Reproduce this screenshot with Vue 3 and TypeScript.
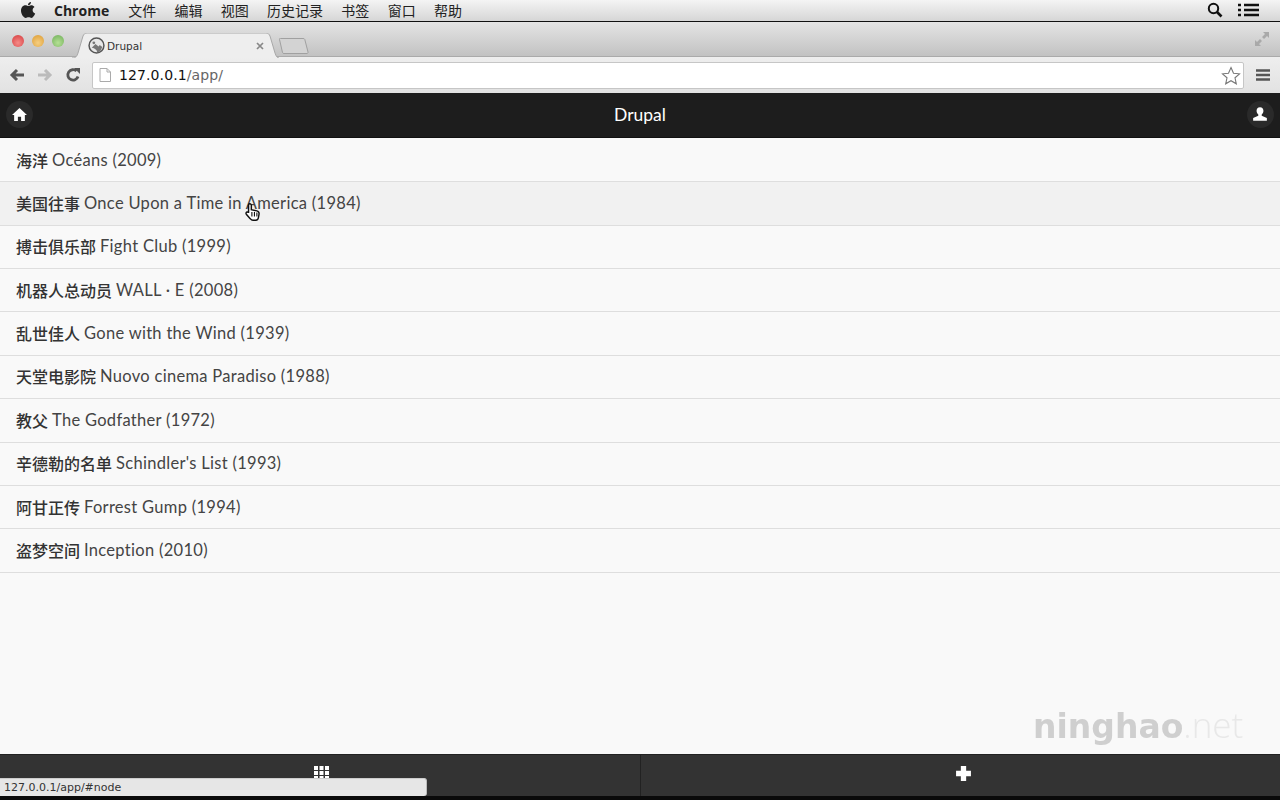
<script setup lang="ts">
const menus: string[] = ['文件', '编辑', '视图', '历史记录', '书签', '窗口', '帮助']
const movies: { zh: string; en: string }[] = [
  { zh: '海洋', en: 'Océans (2009)' },
  { zh: '美国往事', en: 'Once Upon a Time in America (1984)' },
  { zh: '搏击俱乐部', en: 'Fight Club (1999)' },
  { zh: '机器人总动员', en: 'WALL · E (2008)' },
  { zh: '乱世佳人', en: 'Gone with the Wind (1939)' },
  { zh: '天堂电影院', en: 'Nuovo cinema Paradiso (1988)' },
  { zh: '教父', en: 'The Godfather (1972)' },
  { zh: '辛德勒的名单', en: "Schindler's List (1993)" },
  { zh: '阿甘正传', en: 'Forrest Gump (1994)' },
  { zh: '盗梦空间', en: 'Inception (2010)' },
]
</script>

<template>
  <div class="screen">
    <header class="menubar">
      <svg class="apple" viewBox="0 0 16 18" width="16" height="18">
        <path d="M11 1c.2 1.500-1.300 3.300-3 3.200C7.800 2.700 9.400 1.100 11 1zM8 5c.8 0 1.800-.8 3.200-.8 1.200 0 2.500.6 3.300 1.800-2.800 1.600-2.300 5.500.7 6.600-.7 1.700-2.200 4.400-3.800 4.400-1 0-1.500-.7-2.800-.7s-1.900.7-2.900.7C3.800 17 1 13.200 1 9.800 1 6.500 3.100 4.300 5.300 4.300 6.400 4.300 7.300 5 8 5z" fill="#222" />
      </svg>
      <strong class="app-name">Chrome</strong>
      <nav class="menus"><span v-for="m in menus" :key="m">{{ m }}</span></nav>
      <span class="spacer"></span>
      <svg viewBox="0 0 16 16" width="16" height="16" class="sys-search">
        <circle cx="6.500" cy="6.500" r="4.700" fill="none" stroke="#111" stroke-width="2" />
        <path d="M10 10l4.500 4.500" stroke="#111" stroke-width="2.600" />
      </svg>
      <svg viewBox="0 0 21 14" width="21" height="14" class="sys-list">
        <path d="M0 2h3M6 2h15M0 7h3M6 7h15M0 12h3M6 12h15" stroke="#111" stroke-width="2.400" />
      </svg>
    </header>

    <section class="tabstrip">
      <div class="lights"><i class="red"></i><i class="yellow"></i><i class="green"></i></div>
      <div class="tab">
        <svg class="tab-bg" viewBox="0 0 207 25" width="207" height="25">
          <path d="M0 25C4 25 5 23 6 20L11 3C12 1 13 0 15 0H194C196 0 197 1 198 3L203 20C204 23 205 25 207 25" fill="#eeeeee" stroke="#a8a8a8" />
        </svg>
        <svg class="favicon" viewBox="0 0 16 16" width="17" height="17">
          <circle cx="8" cy="8" r="7" fill="#e8e8e8" stroke="#555" stroke-width="1.400" />
          <path d="M3.500 10c2 0 3 .8 4.500 2.500l.8 2 2.700-1 2-4-2.500-2-1 1.500-3-2.500z" fill="#777" />
          <circle cx="5.500" cy="5.500" r="1.300" fill="#777" />
        </svg>
        <span class="tab-title">Drupal</span>
        <svg class="tab-close" viewBox="0 0 8 8" width="8" height="8">
          <path d="M1 1l6 6M7 1L1 7" stroke="#888" stroke-width="1.700" />
        </svg>
      </div>
      <svg class="newtab" viewBox="0 0 31 16" width="31" height="16">
        <path d="M1.500 1.500C1 .8 1.500.5 2.500.5H25c1 0 1.500.3 1.800 1L30 14c.2.800-.2 1.500-1 1.500H6c-.8 0-1.300-.3-1.500-1z" fill="#d3d3d3" stroke="#a0a0a0" />
      </svg>
      <span class="spacer"></span>
      <svg class="expand" viewBox="0 0 16 16" width="16" height="16">
        <path d="M9 1h6v6l-2-2-3 3-2-2 3-3zM7 15H1V9l2 2 3-3 2 2-3 3z" fill="#a9a9a9" />
      </svg>
    </section>

    <section class="toolbar">
      <svg viewBox="0 0 16 14" width="16" height="14">
        <path d="M15 7H4M8 2L3 7l5 5" fill="none" stroke="#555" stroke-width="3" />
      </svg>
      <svg viewBox="0 0 16 14" width="16" height="14">
        <path d="M1 7h11M8 2l5 5-5 5" fill="none" stroke="#bbb" stroke-width="3" />
      </svg>
      <svg viewBox="0 0 16 16" width="16" height="16">
        <path d="M13 9.500A5.200 5.200 0 1 1 11.500 4" fill="none" stroke="#555" stroke-width="2.800" />
        <path d="M9 1h6v6z" fill="#555" />
      </svg>
      <div class="omnibox">
        <svg viewBox="0 0 12 14" width="12" height="14">
          <path d="M1 .5h7l3.500 3.500v9.500H1zM8 .5V4h3.500" fill="#fff" stroke="#aaa" />
        </svg>
        <span class="url"><b>127.0.0.1</b>/app/</span>
        <span class="spacer"></span>
        <svg viewBox="0 0 20 19" width="20" height="19">
          <path d="M10 1.500l2.500 5.700 6 .6-4.500 4 1.300 6L10 14.700l-5.300 3.100 1.300-6-4.500-4 6-.6z" fill="#fff" stroke="#777" stroke-width="1.100" />
        </svg>
      </div>
      <svg viewBox="0 0 14 14" width="14" height="14" class="wrench">
        <path d="M0 2.500h14M0 7h14M0 11.500h14" stroke="#555" stroke-width="2.400" />
      </svg>
    </section>

    <header class="appbar">
      <span class="round-btn">
        <svg viewBox="0 0 14 14" width="15" height="15">
          <path d="M7 1L0 7.500h2V13h3.500V9h3v4H12V7.500h2z" fill="#fff" />
        </svg>
      </span>
      <h1>Drupal</h1>
      <span class="round-btn">
        <svg viewBox="0 0 14 14" width="16" height="16">
          <path d="M7 1c2 0 3 1.400 3 3.200 0 1.400-.7 2.700-1.500 3.300v1.100L13 10.500V13H1v-2.500l4.500-1.900V7.500C4.700 6.900 4 5.600 4 4.200 4 2.400 5 1 7 1z" fill="#fff" />
        </svg>
      </span>
    </header>

    <main class="content">
      <ul class="list">
        <li v-for="(movie, i) in movies" :key="movie.en" :class="{ hover: i === 1 }">
          <span class="zh">{{ movie.zh }}</span><span>{{ movie.en }}</span>
        </li>
      </ul>
      <div class="watermark"><b>ninghao</b><span>.net</span></div>
      <svg class="cursor" viewBox="0 0 14 18" width="16" height="20">
        <path d="M4 1.500c1 0 1.500.6 1.500 1.500v4l5 1c1.500.4 2 1 2 2.500l-.5 3c-.2 1.500-1 3-2.500 3H7c-1 0-1.800-.6-2.500-1.500L1 11c-.6-1-.2-2 .8-2 .6 0 1.100.4 1.200.8V3c0-1 .3-1.500 1-1.500z" fill="#fff" stroke="#111" stroke-width="1.300" />
        <path d="M6 9v4M8.300 9v4M10.500 9.500V13" stroke="#111" stroke-width="1" />
      </svg>
    </main>

    <footer class="tabbar">
      <div class="tabcell">
        <svg viewBox="0 0 15 14" width="15" height="14">
          <path d="M0 0h4v4H0zM5.500 0h4v4h-4zM11 0h4v4h-4zM0 5h4v4H0zM5.500 5h4v4h-4zM11 5h4v4h-4zM0 10h4v4H0zM5.500 10h4v4h-4zM11 10h4v4h-4z" fill="#fff" />
        </svg>
      </div>
      <div class="tabcell">
        <svg viewBox="0 0 16 16" width="17" height="17">
          <path d="M5.500 1h5v4.500H15v5h-4.500V15h-5v-4.500H1v-5h4.500z" fill="#fff" />
        </svg>
      </div>
    </footer>
    <div class="bottom-edge"></div>
    <div class="status">127.0.0.1/app/#node</div>
  </div>
</template>

<style>
html, body { margin: 0; padding: 0; overflow: hidden; }
</style>

<style scoped>
.screen {
  position: relative;
  width: 1280px;
  height: 800px;
  display: flex;
  flex-direction: column;
  overflow: hidden;
  font-family: "Liberation Sans", "Noto Sans CJK SC", sans-serif;
  background: #f9f9f9;
}
.spacer { flex: 1; }
.menubar {
  flex: 0 0 22px;
  box-sizing: border-box;
  display: flex;
  align-items: center;
  padding: 0 21px 1px 20px;
  background: linear-gradient(#f4f4f4, #d6d6d6);
  border-bottom: 1px solid #111;
  color: #222;
}
.app-name { margin-left: 18px; font-size: 14px; font-family: "Open Sans", sans-serif; }
.menus {
  display: flex;
  gap: 18.300px;
  margin-left: 19px;
  font: 14px "Noto Sans CJK SC", sans-serif;
  line-height: 20px;
}
.sys-search { margin-right: 15px; }
.tabstrip {
  flex: 0 0 35px;
  min-height: 0;
  height: 35px;
  display: flex;
  align-items: flex-start;
  background: linear-gradient(#e4e4e4, #c2c2c2);
  box-sizing: border-box;
  padding: 0 10px 0 12px;
  border-bottom: 1px solid #aaa;
}
.lights { display: flex; gap: 8px; margin-top: 13px; }
.lights i { width: 12px; height: 12px; border-radius: 50%; }
.red { background: radial-gradient(circle at 50% 65%, #f58b88, #d43a3c); }
.yellow { background: radial-gradient(circle at 50% 65%, #f5cf82, #dc9a30); }
.green { background: radial-gradient(circle at 50% 65%, #b5e095, #6fae58); }
.tab {
  position: relative;
  flex: none;
  width: 207px;
  height: 25px;
  margin: 11px 0 0 8px;
  box-sizing: border-box;
  display: flex;
  align-items: center;
  padding: 0 15px 0 16px;
  font-size: 11px;
  color: #333;
}
.tab-bg { position: absolute; left: 0; top: 0; }
.favicon, .tab-title, .tab-close { position: relative; }
.tab-title {
  margin-left: 2px;
  flex: 1;
  font-family: "DejaVu Sans", sans-serif;
  font-size: 10.500px;
}
.newtab { margin: 16px 0 0 -1px; }
.expand { margin-top: 9px; }
.toolbar {
  flex: 0 0 36px;
  box-sizing: border-box;
  display: flex;
  align-items: center;
  gap: 12px;
  padding: 0 10px 0 9px;
  background: linear-gradient(#eeeeee, #e2e2e2);
}
.omnibox {
  flex: 1;
  height: 27px;
  display: flex;
  align-items: center;
  gap: 8px;
  box-sizing: border-box;
  padding: 0 2px 0 6px;
  margin: 0 0 0 -1px;
  background: #fff;
  border: 1px solid #c6c6c6;
  border-radius: 2px;
}
.url {
  font-family: "DejaVu Sans", sans-serif;
  font-size: 14px;
  letter-spacing: .1px;
  color: #666;
}
.url b { font-weight: normal; color: #111; }
.appbar {
  flex: 0 0 45px;
  box-sizing: border-box;
  display: flex;
  align-items: center;
  justify-content: space-between;
  padding: 0 6px 2px;
  background: #1d1d1d;
  border-bottom: 1px solid #111;
}
.appbar h1 {
  margin: 0;
  font: 400 17.500px Lato, sans-serif;
  color: #fff;
}
.round-btn {
  width: 27px;
  height: 27px;
  border-radius: 50%;
  background: #2a2a2a;
  display: flex;
  align-items: center;
  justify-content: center;
}
.content { flex: 1; position: relative; background: #f9f9f9; min-height: 0; }
.list { list-style: none; margin: 0; padding: 1px 0 0; }
.list li {
  box-sizing: border-box;
  height: 43.370px;
  padding: 0 0 1px 16px;
  display: flex;
  align-items: center;
  gap: 4px;
  border-bottom: 1px solid #dedede;
  background: #f9f9f9;
  font: 400 16.500px Lato, "Noto Sans CJK SC", sans-serif;
  letter-spacing: .3px;
  color: #444;
}
.list li.hover { background: #f1f1f1; }
.zh {
  font: 500 16px "Noto Sans CJK SC", sans-serif;
  letter-spacing: 0;
  color: #333;
}
.watermark {
  position: absolute;
  left: 1033px;
  top: 563px;
  font: 700 33px "DejaVu Sans", sans-serif;
  color: #cfcfcf;
  filter: blur(.6px);
  white-space: nowrap;
}
.watermark span { font: 300 35px "Open Sans", sans-serif; color: #e8e8e8; }
.cursor { position: absolute; left: 245px; top: 64px; }
.tabbar {
  flex: 0 0 42px;
  display: flex;
  background: #333;
  border-top: 1px solid #222;
  box-sizing: border-box;
}
.tabcell {
  width: 50%;
  box-sizing: border-box;
  display: flex;
  align-items: center;
  justify-content: center;
  padding: 0 0 5px 2px;
}
.tabcell + .tabcell { border-left: 1px solid #222; padding-left: 6px; }
.bottom-edge { flex: 0 0 4px; background: #0a0a0a; }
.status {
  position: absolute;
  left: 0;
  top: 778px;
  width: 427px;
  height: 18px;
  box-sizing: border-box;
  padding: 1px 0 0 4px;
  background: #e6e6e6;
  border-top: 1px solid #ccc;
  border-right: 1px solid #bbb;
  border-radius: 0 3px 3px 0;
  font: 11px/15px "DejaVu Sans", sans-serif;
  color: #333;
}
</style>
